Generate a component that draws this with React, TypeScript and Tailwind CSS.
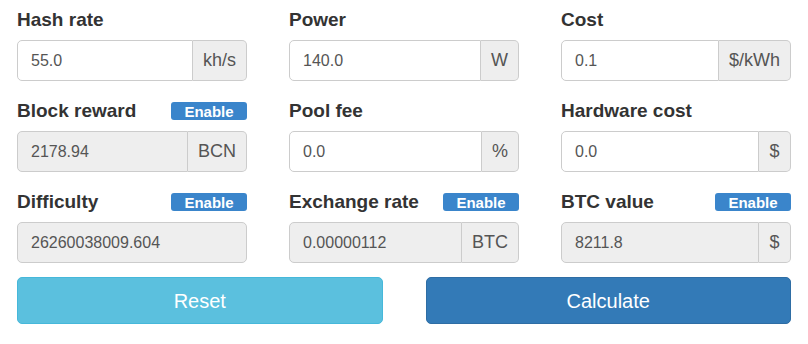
import React from 'react'

type Field = {
  label: string
  value: string
  unit: string
  disabled?: boolean
  toggle?: boolean
}

const fields: Field[] = [
  { label: 'Hash rate', value: '55.0', unit: 'kh/s' },
  { label: 'Power', value: '140.0', unit: 'W' },
  { label: 'Cost', value: '0.1', unit: '$/kWh' },
  { label: 'Block reward', value: '2178.94', unit: 'BCN', disabled: true, toggle: true },
  { label: 'Pool fee', value: '0.0', unit: '%' },
  { label: 'Hardware cost', value: '0.0', unit: '$' },
  { label: 'Difficulty', value: '26260038009.604', unit: '', disabled: true, toggle: true },
  { label: 'Exchange rate', value: '0.00000112', unit: 'BTC', disabled: true, toggle: true },
  { label: 'BTC value', value: '8211.8', unit: '$', disabled: true, toggle: true },
]

function FieldBox({ f }: { f: Field }) {
  return (
    <div className="flex flex-col">
      <div className="flex items-center justify-between h-[24px] mb-[8px]">
        <span className="text-[19px] font-bold text-[#333]">{f.label}</span>
        {f.toggle && (
          <button className="w-[76px] h-[18px] rounded-[3px] bg-[#3a85cb] text-white text-[15px] font-bold leading-none flex items-center justify-center">
            Enable
          </button>
        )}
      </div>
      <div className="flex h-[41px]">
        <input
          readOnly
          value={f.value}
          className={`flex-1 min-w-0 h-full border border-[#ccc] px-[13px] text-[16px] text-[#555] outline-none ${
            f.unit ? 'rounded-l-[5px]' : 'rounded-[5px]'
          } ${f.disabled ? 'bg-[#eee]' : 'bg-white'}`}
        />
        {f.unit && (
          <span className="h-full flex items-center justify-center px-[10px] min-w-[32px] border border-l-0 border-[#ccc] bg-[#eee] rounded-r-[5px] text-[18px] text-[#555]">
            {f.unit}
          </span>
        )}
      </div>
    </div>
  )
}

export default function App() {
  return (
    <div
      className="w-[808px] h-[344px] bg-white px-[17px] pt-[8px]"
      style={{ fontFamily: '"Liberation Sans", Arial, sans-serif' }}
    >
      <div className="grid grid-cols-3 gap-x-[42px] gap-y-[18px]">
        {fields.map((f) => (
          <FieldBox key={f.label} f={f} />
        ))}
      </div>
      <div className="grid grid-cols-2 gap-x-[43px] mt-[14px]">
        <button className="h-[47px] rounded-[5px] bg-[#5bc0de] border border-[#46b8da] text-white text-[20px]">
          Reset
        </button>
        <button className="h-[47px] rounded-[5px] bg-[#337ab7] border border-[#2e6da4] text-white text-[20px]">
          Calculate
        </button>
      </div>
    </div>
  )
}
